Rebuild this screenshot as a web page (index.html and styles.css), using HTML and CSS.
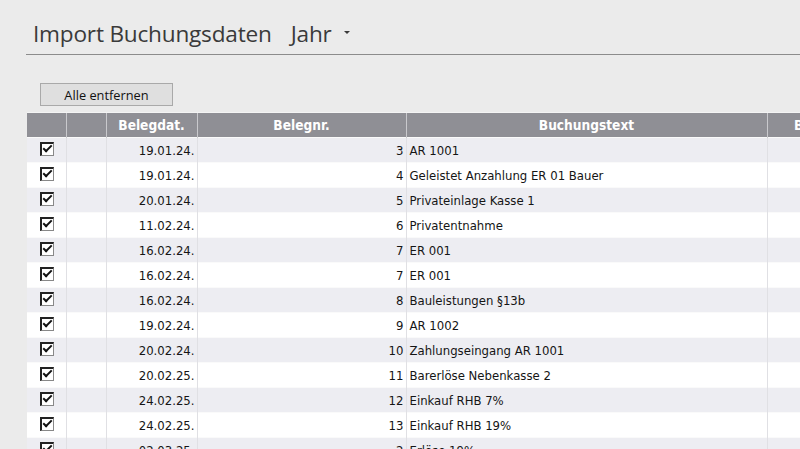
FILE: index.html
```html
<!DOCTYPE html>
<html lang="de">
<head>
<meta charset="utf-8">
<link rel="stylesheet" href="styles.css">
</head>
<body>
<div class="page">
  <header class="titlebar">
    <h1 class="title">Import Buchungsdaten</h1>
    <span class="year">Jahr</span>
    <span class="caret"></span>
  </header>
  <div class="toolbar">
    <button class="btn">Alle entfernen</button>
  </div>
  <div class="grid-wrap">
    <table class="grid">
      <colgroup>
        <col class="c1"><col class="c2"><col class="c3"><col class="c4"><col class="c5"><col class="c6">
      </colgroup>
      <thead>
        <tr><th></th><th></th><th>Belegdat.</th><th>Belegnr.</th><th>Buchungstext</th><th>Betrag</th></tr>
      </thead>
      <tbody>
        <tr><td class="chk"><span class="cb"></span></td><td></td><td class="r">19.01.24.</td><td class="r">3</td><td>AR 1001</td><td></td></tr>
        <tr><td class="chk"><span class="cb"></span></td><td></td><td class="r">19.01.24.</td><td class="r">4</td><td>Geleistet Anzahlung ER 01 Bauer</td><td></td></tr>
        <tr><td class="chk"><span class="cb"></span></td><td></td><td class="r">20.01.24.</td><td class="r">5</td><td>Privateinlage Kasse 1</td><td></td></tr>
        <tr><td class="chk"><span class="cb"></span></td><td></td><td class="r">11.02.24.</td><td class="r">6</td><td>Privatentnahme</td><td></td></tr>
        <tr><td class="chk"><span class="cb"></span></td><td></td><td class="r">16.02.24.</td><td class="r">7</td><td>ER 001</td><td></td></tr>
        <tr><td class="chk"><span class="cb"></span></td><td></td><td class="r">16.02.24.</td><td class="r">7</td><td>ER 001</td><td></td></tr>
        <tr><td class="chk"><span class="cb"></span></td><td></td><td class="r">16.02.24.</td><td class="r">8</td><td>Bauleistungen §13b</td><td></td></tr>
        <tr><td class="chk"><span class="cb"></span></td><td></td><td class="r">19.02.24.</td><td class="r">9</td><td>AR 1002</td><td></td></tr>
        <tr><td class="chk"><span class="cb"></span></td><td></td><td class="r">20.02.24.</td><td class="r">10</td><td>Zahlungseingang AR 1001</td><td></td></tr>
        <tr><td class="chk"><span class="cb"></span></td><td></td><td class="r">20.02.25.</td><td class="r">11</td><td>Barerlöse Nebenkasse 2</td><td></td></tr>
        <tr><td class="chk"><span class="cb"></span></td><td></td><td class="r">24.02.25.</td><td class="r">12</td><td>Einkauf RHB 7%</td><td></td></tr>
        <tr><td class="chk"><span class="cb"></span></td><td></td><td class="r">24.02.25.</td><td class="r">13</td><td>Einkauf RHB 19%</td><td></td></tr>
        <tr><td class="chk"><span class="cb"></span></td><td></td><td class="r">02.03.25.</td><td class="r">2</td><td>Erlöse 19%</td><td></td></tr>
      </tbody>
    </table>
  </div>
</div>
</body>
</html>
```
FILE: styles.css
```css
html, body {
  margin: 0;
  padding: 0;
  background: #ebebeb;
  overflow: hidden;
}
.page {
  width: 800px;
  height: 449px;
  overflow: hidden;
}
.titlebar {
  display: flex;
  align-items: baseline;
  margin-left: 26px;
  padding: 18px 0 0 7px;
  height: 36px;
  box-sizing: content-box;
  border-bottom: 1px solid #8c8c8c;
  font-family: "Open Sans", "Noto Sans", sans-serif;
  color: #3a3a3a;
}
.title {
  margin: 0;
  font-size: 22.6px;
  font-weight: 400;
  letter-spacing: -0.2px;
}
.year {
  margin-left: 19px;
  font-size: 22.6px;
  letter-spacing: -0.2px;
}
.caret {
  margin-left: 12px;
  width: 0;
  height: 0;
  border-left: 3px solid transparent;
  border-right: 3px solid transparent;
  border-top: 3px solid #3a3a3a;
  transform: translateY(-8px);
}
.toolbar {
  padding: 28px 0 0 40px;
  height: 29px;
  box-sizing: content-box;
}
.btn {
  width: 133px;
  height: 23px;
  padding: 0;
  background: #dfdfdf;
  border: 1px solid #a9a9a9;
  border-radius: 0;
  font-family: "Open Sans", "Noto Sans", sans-serif;
  font-size: 12.8px;
  color: #111;
}
.grid-wrap {
  margin-left: 27px;
  overflow: hidden;
}
.grid {
  border-collapse: collapse;
  table-layout: fixed;
  width: 840px;
  font-family: "DejaVu Sans Condensed", "DejaVu Sans", sans-serif;
  font-size: 13px;
  color: #151515;
}
.c1 { width: 39px; }
.c2 { width: 40px; }
.c3 { width: 91px; }
.c4 { width: 209px; }
.c5 { width: 361px; }
.c6 { width: 100px; }
.grid th {
  height: 24px;
  padding: 0;
  background: #8f8f95;
  color: #fff;
  font-size: 13.6px;
  font-weight: bold;
  text-align: center;
  border-left: 1px solid #c9c9cd;
  border-top: 1px solid #f4f4f4;
}
.grid th:first-child { border-left: none; }
.grid td {
  height: 24px;
  padding: 0 2px 0 3px;
  border-left: 1px solid #e0e0e4;
  border-top: 1px solid #fafafa;
  white-space: nowrap;
  overflow: hidden;
}
.grid td:first-child { border-left: none; }
.grid tbody tr:nth-child(odd) td { background: #ededf2; }
.grid tbody tr:nth-child(even) td { background: #ffffff; }
.grid td.r { text-align: right; }
.grid td.chk { padding: 0 0 0 13px; }
.cb {
  display: block;
  width: 11px;
  height: 11px;
  background: #fff;
  border-top: 2px solid #222;
  border-left: 2px solid #222;
  border-right: 1px solid #888;
  border-bottom: 1px solid #888;
  position: relative;
  top: -1px;
}
.cb::after {
  content: "";
  position: absolute;
  left: 1px;
  top: 1px;
  width: 7px;
  height: 3px;
  border-left: 2px solid #111;
  border-bottom: 2px solid #111;
  transform: rotate(-45deg);
}
```
